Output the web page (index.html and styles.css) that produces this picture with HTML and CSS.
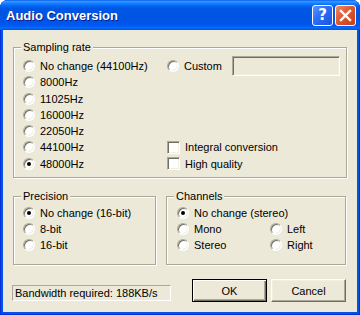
FILE: index.html
```html
<!DOCTYPE html>
<html lang="en">
<head>
  <meta charset="UTF-8" />
  <title>Audio Conversion</title>
  <link rel="stylesheet" href="styles.css">
</head>
<body>
  <div class="window">
    <div class="titlebar">
      <span class="title">Audio Conversion</span>
      <div class="title-buttons">
        <span class="tbtn help">?</span>
        <span class="tbtn close">
          <svg width="19" height="19" viewBox="0 0 19 19">
            <path d="M5 5 L14 14 M14 5 L5 14" stroke="#fff" stroke-width="2.4" stroke-linecap="square" fill="none"/>
          </svg>
        </span>
      </div>
    </div>

    <div class="client">
      <div class="group sampling">
        <span class="legend">Sampling rate</span>
        <div class="sampling-grid">
          <div class="opt"><span class="radio"></span>No change (44100Hz)</div>
          <div class="opt"><span class="radio"></span>8000Hz</div>
          <div class="opt"><span class="radio"></span>11025Hz</div>
          <div class="opt"><span class="radio"></span>16000Hz</div>
          <div class="opt"><span class="radio"></span>22050Hz</div>
          <div class="opt"><span class="radio"></span>44100Hz</div>
          <div class="opt"><span class="radio on"></span>48000Hz</div>

          <div class="opt custom"><span class="radio"></span><span class="custom-label">Custom</span><span class="field"></span></div>
          <div class="opt integral"><span class="check"></span>Integral conversion</div>
          <div class="opt quality"><span class="check"></span>High quality</div>
        </div>
      </div>

      <div class="groups-row">
        <div class="group precision">
          <span class="legend">Precision</span>
          <div class="opt"><span class="radio on"></span>No change (16-bit)</div>
          <div class="opt"><span class="radio"></span>8-bit</div>
          <div class="opt"><span class="radio"></span>16-bit</div>
        </div>
        <div class="group channels">
          <span class="legend">Channels</span>
          <div class="channels-grid">
            <div class="opt wide"><span class="radio on"></span>No change (stereo)</div>
            <div class="opt"><span class="radio"></span>Mono</div>
            <div class="opt"><span class="radio"></span>Left</div>
            <div class="opt"><span class="radio"></span>Stereo</div>
            <div class="opt"><span class="radio"></span>Right</div>
          </div>
        </div>
      </div>

      <div class="bottom-row">
        <div class="status">Bandwidth required: 188KB/s</div>
        <button class="btn default">OK</button>
        <button class="btn">Cancel</button>
      </div>
    </div>
  </div>
</body>
</html>
```

FILE: styles.css
```css
body {
  margin: 0;
  background-color: #ffffff;
  font-family: "Liberation Sans", Arial, sans-serif;
  font-size: 11px;
  color: #000;
}

.window {
  width: 360px;
  height: 315px;
  box-sizing: border-box;
  padding: 0 3px 3px;
  display: flex;
  flex-direction: column;
  background-color: #0055e5;
  border-radius: 8px 8px 0 0;
  box-shadow: inset 1px 0 0 #0831d9, inset -1px 0 0 #0831d9, inset 0 -1px 0 #0831d9;
}

.titlebar {
  flex: none;
  height: 30px;
  margin: 0 -3px;
  padding: 0 4px 0 6px;
  display: flex;
  align-items: center;
  border-radius: 8px 8px 0 0;
  background: linear-gradient(to bottom,
    #0058ee 0%, #3a93ff 4%, #288eff 8%, #127dff 12%, #036ffc 17%,
    #0262ee 22%, #0057e5 28%, #0054e3 60%, #0055eb 80%,
    #005bf5 87%, #026afe 92%, #0062ef 96%, #0052d6 100%);
}

.title {
  flex: 1;
  color: #fff;
  font-weight: bold;
  font-size: 13px;
  text-shadow: 1px 1px 0 #0a1c8c;
}

.title-buttons {
  display: flex;
  gap: 2px;
}

.tbtn {
  width: 21px;
  height: 21px;
  box-sizing: border-box;
  border: 1px solid #fff;
  border-radius: 3px;
  display: flex;
  align-items: center;
  justify-content: center;
  color: #fff;
}

.help {
  background: linear-gradient(135deg, #5a95ff 0%, #2b6ef5 45%, #1a52de 100%);
  font-family: "DejaVu Sans", sans-serif;
  font-weight: bold;
  font-size: 15px;
}

.close {
  background: linear-gradient(135deg, #ee8a68 0%, #e0582f 45%, #c43e1a 100%);
}

.client {
  flex: 1;
  background-color: #ece9d8;
  padding: 17px 11px 0 10px;
}

.group {
  position: relative;
  box-sizing: border-box;
  border: 1px solid #aca899;
  box-shadow: inset 1px 1px 0 #fff, 1px 1px 0 #fff;
}

.legend {
  position: absolute;
  top: -7px;
  left: 7px;
  padding: 0 2px;
  line-height: 13px;
  background-color: #ece9d8;
}

.opt {
  display: flex;
  align-items: center;
  gap: 5px;
  height: 16px;
  white-space: nowrap;
}

.radio {
  flex: none;
  position: relative;
  width: 12px;
  height: 12px;
  box-sizing: border-box;
  border-radius: 50%;
  background-color: #fff;
  border: 1px solid;
  border-color: #aca899 #fff #fff #aca899;
  box-shadow: inset 1px 1px 0 #716f64, inset -1px -1px 0 #f1efe2;
}

.radio.on::after {
  content: "";
  position: absolute;
  left: 3px;
  top: 3px;
  width: 4px;
  height: 4px;
  border-radius: 50%;
  background-color: #000;
}

.check {
  flex: none;
  width: 13px;
  height: 13px;
  box-sizing: border-box;
  background-color: #fff;
  border: 1px solid;
  border-color: #aca899 #fff #fff #aca899;
  box-shadow: inset 1px 1px 0 #716f64, inset -1px -1px 0 #f1efe2;
}

.sampling {
  width: 334px;
  height: 131px;
  padding: 10px 0 0 9px;
}

.sampling-grid {
  display: grid;
  grid-template-columns: 144px 1fr;
  grid-auto-rows: 16.25px;
}

.sampling-grid .opt {
  grid-column: 1;
  height: auto;
}

.sampling-grid .custom {
  grid-column: 2;
  grid-row: 1;
}

.sampling-grid .integral {
  grid-column: 2;
  grid-row: 6;
}

.sampling-grid .quality {
  grid-column: 2;
  grid-row: 7;
}

.custom-label {
  width: 43px;
}

.field {
  flex: none;
  width: 108px;
  height: 20px;
  box-sizing: border-box;
  background-color: #ece9d8;
  border: 1px solid;
  border-color: #aca899 #fff #fff #aca899;
  box-shadow: inset 1px 1px 0 #716f64, inset -1px -1px 0 #f1efe2;
}

.groups-row {
  display: flex;
  gap: 10px;
  margin-top: 18px;
}

.precision {
  width: 143px;
  height: 69px;
  padding: 8px 0 0 9px;
}

.channels {
  width: 180px;
  height: 69px;
  padding: 8px 0 0 10px;
}

.channels-grid {
  display: grid;
  grid-template-columns: 93px 1fr;
  grid-auto-rows: 16px;
}

.channels-grid .wide {
  grid-column: 1 / 3;
}

.bottom-row {
  display: flex;
  align-items: flex-start;
  margin: 14px 0 0 -1px;
}

.status {
  width: 159px;
  height: 16px;
  box-sizing: border-box;
  margin-top: 6px;
  padding-left: 2px;
  line-height: 14px;
  border: 1px solid;
  border-color: #aca899 #fff #fff #aca899;
  white-space: nowrap;
}

.btn {
  width: 75px;
  height: 23px;
  padding: 0;
  margin-left: 4px;
  font-family: "Liberation Sans", Arial, sans-serif;
  font-size: 11px;
  color: #000;
  background-color: #ece9d8;
  border: 1px solid;
  border-color: #fff #716f64 #716f64 #fff;
  box-shadow: inset -1px -1px 0 #aca899, inset 1px 1px 0 #f1efe2;
}

.btn.default {
  margin-left: auto;
  border: 1px solid #000;
  box-shadow: inset 1px 1px 0 #fff, inset -1px -1px 0 #716f64, inset -2px -2px 0 #aca899;
}
```
